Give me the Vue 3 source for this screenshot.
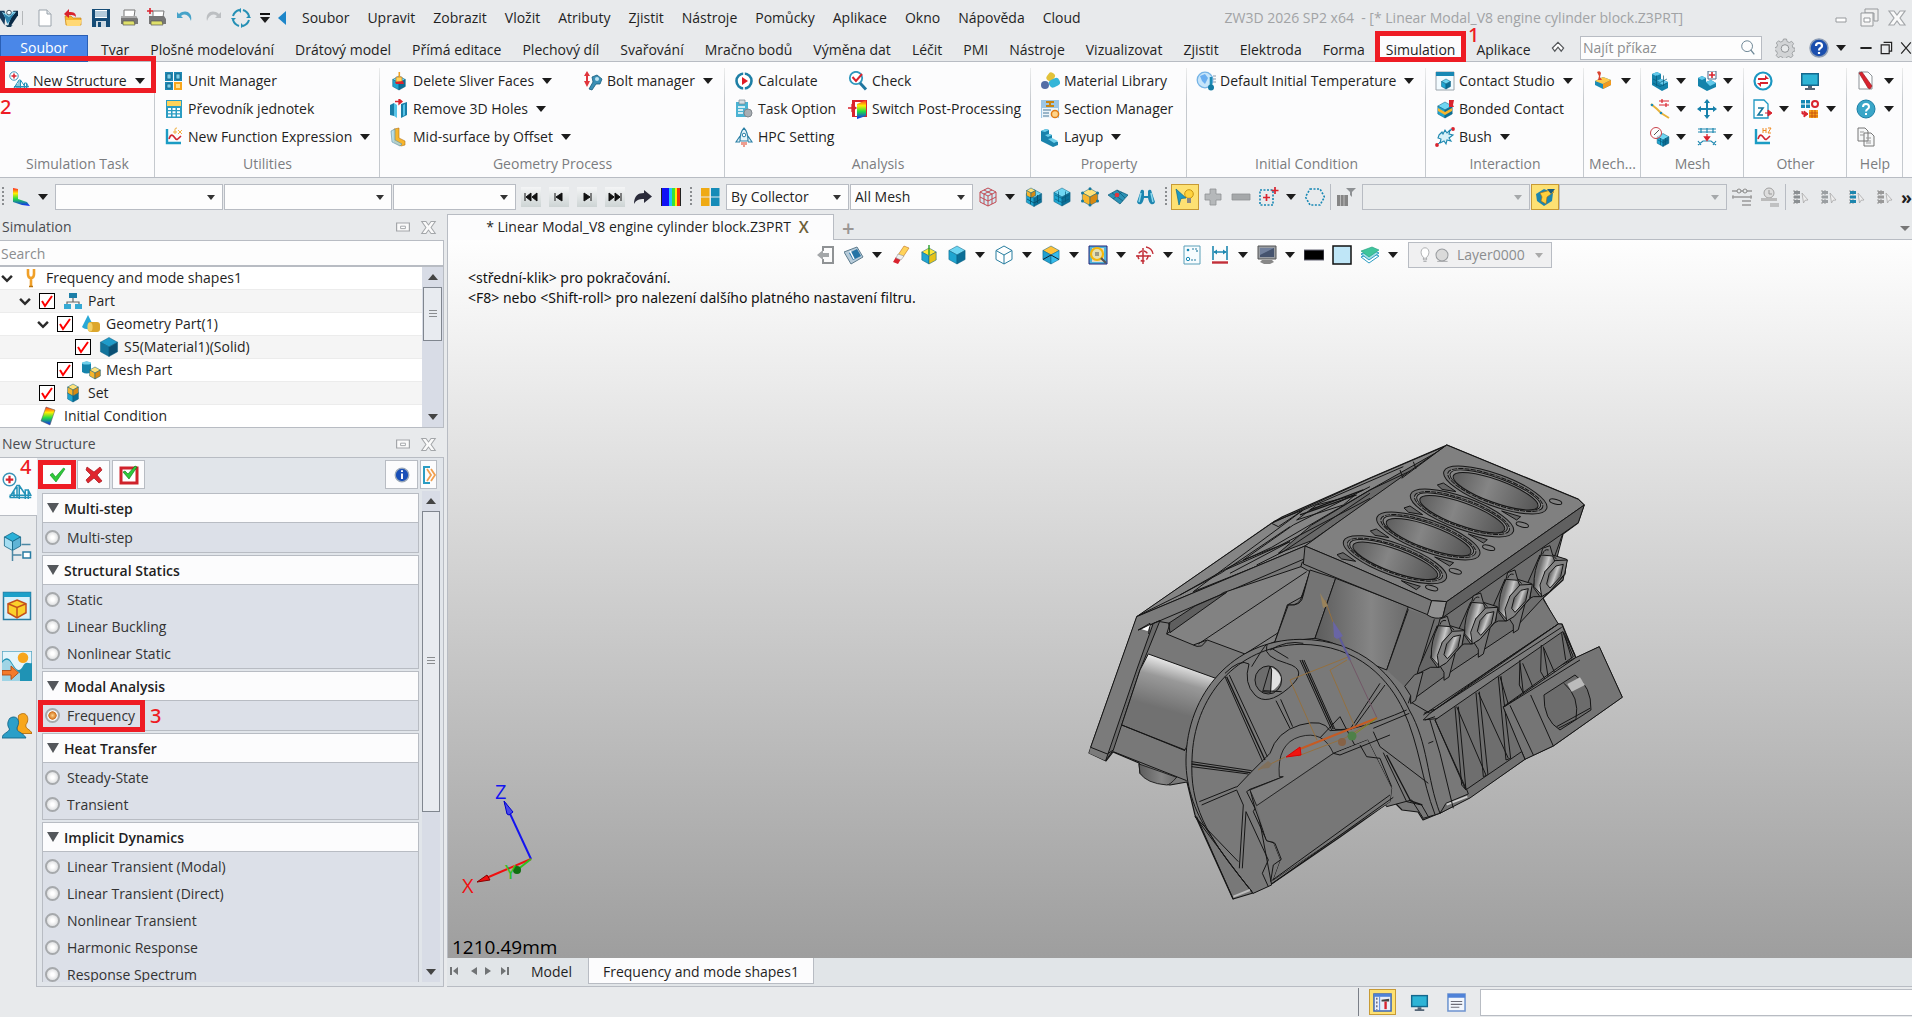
<script setup>
import { h, ref } from 'vue'

const cube = (t, l, r, x = 10, y = 10, s = 8) => {
  const w = s * 0.9, k = s / 2
  return `<g stroke="#0b5f80" stroke-width=".5" stroke-linejoin="round"><path fill="${t}" d="M${x} ${y - s}l${w} ${k}l${-w} ${k}l${-w} ${-k}z"/><path fill="${l}" d="M${x - w} ${y - k}l${w} ${k}v${s}l${-w} ${-k}z"/><path fill="${r}" d="M${x + w} ${y - k}l${-w} ${k}v${s}l${w} ${-k}z"/></g>`
}
const blue = (x, y, s) => cube('#6fd6f2', '#1fa5d0', '#0b6f97', x, y, s)
const gold = (x, y, s) => cube('#ffe27a', '#f7b52c', '#d88a12', x, y, s)
const grid = '<path d="M3 8l7 3.5 7-3.5M3 12l7 3.5 7-3.5M6.500 4.500v10.500M13.500 4.500v10.500" fill="none" stroke="#075a7a" stroke-width=".7"/>'
const plotAxes = '<path d="M3 2v14h14" fill="none" stroke="#1b9cc4" stroke-width="2.400"/><path d="M5 12c2-6 4-4 6-1s3 1 6-2" fill="none" stroke="#d22630" stroke-width="1.600"/>'
const rainbow = '<defs><linearGradient id="rb" x1="0" y1="0" x2="0" y2="1"><stop offset="0" stop-color="#f22"/><stop offset=".3" stop-color="#fe0"/><stop offset=".6" stop-color="#2d4"/><stop offset="1" stop-color="#12f"/></linearGradient></defs>'
const bridge = '<circle cx="5" cy="5" r="4.200" fill="#fff" stroke="#3b94b8" stroke-width="1"/><path d="M5 2.500v5M2.500 5h5" stroke="#d9232e" stroke-width="1.500"/><path d="M5 17l5-8h1.500v9M5 17h14.500M8 13v4M10 10v7M11.500 9l4 6v-3h2v6M15.500 12v6M5 15.500h14.500M17.500 12l2 4" fill="none" stroke="#2593b8" stroke-width="1"/>'
const tick = (c) => `<path d="M3 10l2.500-2 3 4L16.500 3l1.500 1L9 17z" fill="${c}" stroke="#0a8a1a" stroke-width=".6"/>`
const tree = (c) => `<path d="M3 3v14M6 3v14" stroke="#999" stroke-width="1" stroke-dasharray="2 1"/><path d="M3 4h6v3H3zM3 8.500h6v3H3zM3 13h6v3H3z" fill="${c}"/><path d="M11 6l6 7-3 .3-1.500 2.700z" fill="#eee" stroke="#aaa" stroke-width=".8"/>`

const icons = {
  logo: '<path d="M0 2l5 0 1 5-1 11-5-8z" fill="#163a5c"/><path d="M20 2l-5 0-4 9-2 8 3 0 8-12z" fill="#0a2a45"/><path d="M2 3l6 3 5-3 5 0-6 7-3 8-4-10z" fill="#8ed6ef"/><path d="M4 5l6 4 6-5-5 9-3 3z" fill="#2d83ae"/><circle cx="10" cy="4" r="2.600" fill="#f4fafd" stroke="#123" stroke-width=".8"/><path d="M6 18h8l-2 2H8z" fill="#173f5c"/>',
  page: '<path d="M4 2h8l4 4v12H4z" fill="#fff" stroke="#9aa3ab"/><path d="M12 2v4h4" fill="#e3e8ec" stroke="#9aa3ab"/>',
  open: '<path d="M2 8h6l2 2h8v7H3z" fill="#f7b52c" stroke="#c5851a" stroke-width=".7"/><path d="M3 12h16l-2 6H4z" fill="#ffd874"/><path d="M1 6l5-5v3c5 0 7 1 7 5-2-2-4-2-7-2v3z" fill="#d9232e"/>',
  save: '<path d="M1 1h18v18H1z" fill="#164c76"/><path d="M4 2h12v8H4z" fill="#fff"/><path d="M4 4h12M4 6h12M4 8h12" stroke="#6b97b7"/><path d="M5 13h10v6H5z" fill="#cfdbe4"/><path d="M7 14h3v5H7z" fill="#164c76"/>',
  print: '<path d="M5 2h11l-1 7H5z" fill="#fff" stroke="#777"/><path d="M2 8h15l2 3v5H2z" fill="#777"/><path d="M2 8h15l1 2H2z" fill="#aaa"/><path d="M4 13h11l1 4H4z" fill="#dfe06a" stroke="#555" stroke-width=".7"/>',
  printplus: '<path d="M6 3h11l-1 6H6z" fill="#fff" stroke="#777"/><path d="M2 8h15l2 3v5H2z" fill="#777"/><path d="M4 13h11l1 4H4z" fill="#dfe06a" stroke="#555" stroke-width=".7"/><path d="M3 0v6M0 3h6" stroke="#d9232e" stroke-width="1.600"/>',
  undo: '<path d="M2 4v6h6l-2-2c4-3 8-1 10 5 2-9-6-12-12-7z" fill="#46a3c9"/>',
  redo: '<path d="M18 4v6h-6l2-2c-4-3-8-1-10 5-2-9 6-12 12-7z" fill="#bcbfc2"/>',
  refresh: '<g fill="none" stroke="#2590b5" stroke-width="2"><path d="M8 2c-3 1-5 3-6 6M2 12c1 3 3 5 6 6M12 18c3-1 5-3 6-6M18 8c-1-3-3-5-6-6"/></g><path d="M10 0v5L7 2zM0 10h5l-3 3zM10 20v-5l3 3zM20 10h-5l3-3z" fill="#2590b5"/>',
  structure: bridge,
  unit: '<path d="M1 1h8v9H1zM10 1h8v9h-8zM1 11h8v8H1z" fill="#1f88b3"/><path d="M10 11h8v8h-8z" fill="#f7a61c"/><path d="M3 3h4v5H3zM12 3h4v5h-4zM3 13h4v4H3z" fill="#7fd0ea" stroke="#0c5678" stroke-width=".7"/><path d="M12 13h4v4h-4z" fill="#ffe08a"/>',
  calc: '<path d="M2 1h16v18H2z" fill="#2b9cc2"/><path d="M3 2h14v5H3z" fill="#ffd35a"/><path d="M4 9h3v2H4zM8.500 9h3v2h-3zM13 9h3v2h-3zM4 12.300h3v2H4zM8.500 12.300h3v2h-3zM13 12.300h3v2h-3zM4 15.600h3v2H4zM8.500 15.600h3v2h-3zM13 15.600h3v2h-3z" fill="#fff"/>',
  func: plotAxes + '<path d="M9 5h4M11 7V2q0-1 2-1M14 3l4 4M18 3l-4 4" stroke="#f0b040" fill="none"/>',
  sliver: blue(10, 12, 7) + '<path d="M7 6h6v5H7z" fill="#ffd35a" stroke="#a9641a" stroke-width=".6"/><path d="M6 11l8-1 1 3H7z" fill="#d9232e"/><path d="M9.500 1h1.600v5H9.500z" fill="#f0a020"/>',
  holes: '<path d="M1 6l4-2v13l-4-1zM12 5l6-2v13l-6 3z" fill="#1a7fa8"/><path d="M5 4l3 2v13l-3-2zM14 6l2-1v11l-2 1z" fill="#58c4e8"/><path d="M6 2.500h6M10 0l3 2.500L10 5z" stroke="#d9232e" fill="#d9232e" stroke-width="1.300"/>',
  midsurf: '<path d="M5 2l5-1v10l6 3v4l-4 1-7-4z" fill="#f7b52c" stroke="#b1731a" stroke-width=".6"/><path d="M2 4l4-2v11l7 4-2 2-8-4z" fill="#a9d8e8" fill-opacity=".8" stroke="#5e8da0" stroke-width=".6"/>',
  bolt: '<path d="M4 0l3 5H5v5h2l-3 6-3-6h2V5H1z" fill="#e0353d"/><path d="M9 6l5-2 5 4-2 5-4 0-4 6-3-1 4-7z" fill="#3a8fb5" stroke="#155d7d" stroke-width=".8"/><circle cx="14" cy="8" r="2" fill="#bfe4f2"/>',
  calculate: '<circle cx="10" cy="10" r="7.500" fill="#fff" stroke="#1e7fa5" stroke-width="2.600"/><path d="M10 0v4M10 16v4" stroke="#fff" stroke-width="1.600"/><path d="M8 6l6 4-6 4z" fill="#e01b24"/>',
  task: '<path d="M2 3h12v15H2z" fill="#4bb3d3"/><path d="M5 1h6v4H5z" fill="#d6dde2" stroke="#77848c" stroke-width=".7"/><path d="M4 8h7M4 11h5M4 14h5" stroke="#fff" stroke-width="1.400"/><circle cx="14" cy="14" r="4" fill="#a8aeb3" stroke="#7f868c"/>',
  rocket: '<path d="M10 1c3 3 4 6 4 13H6c0-7 1-10 4-13zM6 9l-4 6h4M14 9l4 6h-4" fill="#e6f4fa" stroke="#2a7fa5" stroke-width="1.100"/><circle cx="10" cy="8" r="1.800" fill="#fff" stroke="#2a7fa5"/><path d="M8 15v3M10 15v5M12 15v3" stroke="#e56a55" stroke-width="1.300"/>',
  check: '<circle cx="8" cy="7" r="6.200" fill="#fff" stroke="#2f97bd" stroke-width="1.800"/><path d="M12 12l6 6.500" stroke="#2076a0" stroke-width="3"/><path d="M4.500 6L8 10l6-7" fill="none" stroke="#d9232e" stroke-width="2"/>',
  post: rainbow + '<path d="M4 1h15v17H4z" fill="#d9232e"/><path d="M7 3h10v14H7z" fill="#fff"/><path d="M9 5l9-4v16l-9 3z" fill="url(#rb)"/><path d="M0 9h5M4 6l4 3-4 3z" stroke="#d9232e" fill="#d9232e" stroke-width="1.300"/>',
  material: '<rect x="7" y="1" width="7" height="9" rx="3" fill="#e2c23a" transform="rotate(35 10 6)"/><circle cx="5" cy="14" r="4" fill="#546ea6"/><rect x="9" y="8" width="11" height="8" rx="3.500" fill="#34b5d8" transform="rotate(-25 14 12)"/>',
  section: '<path d="M1 1h18v18H1z" fill="#9cc6e6"/><path d="M6 2h8v2h-3v2h3v2H6V6h3V4H6z" fill="#c98412"/><path d="M2 9h16v10H2z" fill="#edf4f9"/><path d="M3 11h8M3 14h6M3 17h6" stroke="#47779a" stroke-width="1.200"/><circle cx="15" cy="15" r="3.600" fill="#ffd48a" stroke="#e07c15" stroke-width="1.500"/>',
  layup: '<path d="M1 4l5-2 3 1v4l3 1v4l6 3v3l-5 2-12-6z" fill="#1a83ac"/><path d="M1 4l5-2 3 1-4 2zM5 8l4-1 3 1-4 2zM8 12l4-1 6 3-4 2z" fill="#6fd0ec"/>',
  temp: '<circle cx="9" cy="9" r="7.800" fill="#c7e5fa" stroke="#76b4e6" stroke-width="1.300"/><path d="M4 5l5-2 3 4-3 6-3-3z" fill="#6aaef0"/><path d="M15 6v10" stroke="#1c8bb4" stroke-width="2.600"/><circle cx="15" cy="16.500" r="3" fill="#147ba3"/><path d="M17 5h3M17 8h3M17 11h3" stroke="#89a"/>',
  contact: '<path d="M1 1h18v18H1z" fill="#f2fbff" stroke="#9aa3ab"/><path d="M1 1h18v4H1z" fill="#1788b4"/>' + blue(11, 13, 5),
  bonded: blue(10, 11, 8) + '<path d="M3 9l7 4 7-4v3l-7 4-7-4z" fill="#f7b52c"/><path d="M14 1h5l-1 5 1 2h-5z" fill="#d9232e"/>',
  bush: '<path d="M4 8l3-3 1 2 2-4 2 3 3-3-1 4 4 1-4 3 2 3-4-1-1 4-2-3-4 2 1-4-3-1z" fill="#d8f1f8" stroke="#1f88b0" stroke-width="1.100"/><circle cx="18" cy="2" r="1.900" fill="#d9232e"/><circle cx="2" cy="18" r="1.900" fill="#d9232e"/><path d="M3 17l3-3M14 5l3-3" stroke="#1f88b0"/>',
  mech: '<path d="M2 10l8-4 8 3v5l-8 4-8-4z" fill="#1b8bb5"/><path d="M2 10l8-4 8 3-8 4z" fill="#ffc94a"/><path d="M10 13v5l8-4V9z" fill="#f39a1f"/><path d="M4 1q3-2 4 1l-1 4 2 3H5l1-4z" fill="#d9432e"/>',
  mesh1: '<path d="M2 3l5-2 4 2v5l7 3v6l-6 3-10-6z" fill="#1583ab"/><path d="M2 3l5-2 4 2-5 2zM6 10l5-2 7 3-5 3z" fill="#63c9ea"/>' + grid,
  mesh2: '<path d="M1 7l4-2 4 2v4l5-2 5 3v4l-9 4-9-5z" fill="#1583ab"/><path d="M1 7l4-2 4 2-4 2zM9 11l5-2 5 3-6 3z" fill="#63c9ea"/><path d="M11 0h8v8h-8z" fill="#fff" stroke="#468"/><path d="M15 1v6M12 4h6" stroke="#d9232e" stroke-width="1.600"/>',
  mesh3: '<path d="M1 5l6 5 4 4 8 5" fill="none" stroke="#e7b23b" stroke-width="2"/><circle cx="2" cy="6" r="1.300" fill="#1c8bb4"/><circle cx="11" cy="14" r="1.300" fill="#1c8bb4"/><path d="M9 2h10M9 6h10M12 0v4M16 4v4" stroke="#d9232e" stroke-width="1.200"/>',
  mesh4: blue(13, 13, 6.500) + '<path d="M8 13l5 2.500 5-2.500M10.500 11v7M15.500 11v7" fill="none" stroke="#075a7a" stroke-width=".7"/><circle cx="6" cy="6" r="5.500" fill="#fff" fill-opacity=".6" stroke="#c8434b"/><path d="M4 8l5-5" stroke="#555"/>',
  move: '<path d="M10 0l3 4h-2v5h5V7l4 3-4 3v-2h-5v5h2l-3 4-3-4h2v-5H4v2l-4-3 4-3v2h5V4H7z" fill="#1680aa"/>',
  mesh5: '<path d="M1 2h18M1 5h18M1 18l5-4h8l5 4M1 14l3 4M19 14l-3 4M4 1v5M10 1v5M16 1v5" fill="none" stroke="#1f88b0" stroke-width="1.200"/><path d="M10 7v4M7.500 10h5L10 13.500z" stroke="#d9232e" fill="#d9232e" stroke-width="1.300"/>',
  swap: '<circle cx="10" cy="10" r="8.500" fill="#fff" stroke="#1c97c2" stroke-width="2.200"/><path d="M5 8h8M15 12H7" stroke="#d9232e" stroke-width="2"/><path d="M12 4l4 4h-4zM8 16l-4-4h4z" fill="#d9232e"/>',
  monitor: '<path d="M1 2h18v13H1z" fill="#14688e"/><path d="M2.500 3.500h15v10h-15z" fill="#2db4d6"/><path d="M8 15h4v2h3v2H5v-2h3z" fill="#567"/>',
  zfile: '<path d="M1 1h10l4 4v14H1z" fill="#fff" stroke="#1c97c2" stroke-width="1.300"/><path d="M5 9h5l-5 7h5" fill="none" stroke="#17779c" stroke-width="1.600"/><path d="M12 14h5M15 11l4 3-4 3z" stroke="#d9232e" fill="#d9232e"/>',
  gridgear: '<path d="M1 1h9v8H1z" fill="#1788b4"/><path d="M5.500 1v8M1 5h9" stroke="#fff"/><circle cx="15" cy="5" r="3" fill="none" stroke="#d9232e" stroke-width="2"/><path d="M9 11h9v8H9z" fill="#f7a61c"/><path d="M9 14h9M9 17h9M12 11v8M15 11v8" stroke="#c1440e" stroke-width=".8"/><path d="M2 12v3h3M4 12l4 3-4 3z" stroke="#d9232e" fill="#d9232e"/>',
  hz: plotAxes + '<path d="M10 1v5M10 3.500h3M13 1v5M15 1h3l-3 5h3" stroke="#f08b20" fill="none"/>',
  pagered: '<path d="M3 1h9l4 4v13H3z" fill="#fff" stroke="#8b9196"/><path d="M3 2l3-1 10 14-2 3-2-1z" fill="#d9232e" stroke="#8b1820" stroke-width=".6"/>',
  helpteal: '<circle cx="10" cy="10" r="9" fill="#3aa6c8" stroke="#1b7ea5"/><path d="M7 8c0-4 6-4 6 0 0 2-3 2-3 4.500M10 14v2" fill="none" stroke="#fff" stroke-width="2"/>',
  copy: '<path d="M2 1h7l3 3v10H2zM8 6h7l3 3v10H8z" fill="#f6f7f8" stroke="#777" stroke-width="1"/><path d="M4 5h4M4 8h4M10 11h5M10 14h5M10 16h5" stroke="#999"/>',
  bend: rainbow + '<path d="M2 1l5 1v10l9 3 3 4-8-1-9-3z" fill="url(#rb)"/>',
  first: '<path d="M4 6v8M10 6l-5 4 5 4zM16 6l-5 4 5 4z" fill="#111" stroke="#111"/>',
  prev: '<path d="M6 6v8M13 6l-6 4 6 4z" fill="#111" stroke="#111"/>',
  next: '<path d="M14 6v8M7 6l6 4-6 4z" fill="#111" stroke="#111"/>',
  last: '<path d="M16 6v8M10 6l5 4-5 4zM4 6l5 4-5 4z" fill="#111" stroke="#111"/>',
  share: '<path d="M1 17c0-8 4-11 10-11V3l8 6.500-8 6.500v-4c-5 0-8 1-10 5z" fill="#2a2b3a"/>',
  colorbar: '<path d="M0 1h20v18H0z" fill="#222"/><path d="M1 1h7v18H1z" fill="#1010f5"/><path d="M8 1h3v18H8z" fill="#1fc4ff"/><path d="M11 1h3v18h-3z" fill="#35e23c"/><path d="M14 1h2v18h-2z" fill="#fff000"/><path d="M16 1h3v18h-3z" fill="#f03010"/>',
  windows: '<path d="M1 1h8.500v8.500H1zM1 10.500h8.500V19H1z" fill="#efaa14"/><path d="M11 1h8.500v8.500H11zM11 10.500h8.500V19H11z" fill="#158bb8"/>',
  wiremesh: '<path d="M2 5l8-4 8 4v10l-8 4-8-4z" fill="#cfeaf3" stroke="#c34850"/><path d="M2 5l8 4 8-4M10 9v10M2 10l8 4 8-4M6 3l8 4v10M14 3L6 7v10" fill="none" stroke="#c34850"/>',
  cubeset: blue(10, 11, 8.500) + gold(7, 6, 5) + '<path d="M3 12l7 4 7-4M6.500 10v7M13.500 8v8" stroke="#064b66" fill="none" stroke-width=".8"/>',
  cubegrid: blue(10, 10, 9) + grid,
  cubegold: gold(10, 10, 8.500) + '<g fill="#13789f"><circle cx="10" cy="1.800" r="1.500"/><circle cx="2.500" cy="6" r="1.500"/><circle cx="17.500" cy="6" r="1.500"/><circle cx="10" cy="18" r="1.500"/><circle cx="2.500" cy="14" r="1.500"/><circle cx="17.500" cy="14" r="1.500"/></g>',
  surf: '<path d="M0 8l9-5 11 5-8 9z" fill="#2a91b5" stroke="#0d5a78" stroke-width=".7"/><path d="M4 6l11 8M9 3l8 8M5 12l9-7" stroke="#0d5a78" stroke-width=".7"/><circle cx="9" cy="8" r="2.300" fill="#e0353d"/>',
  binoc: '<path d="M5 3q2-1 3 1v5h4V4q1-2 3-1l4 12q-1 3-4 2-2-1-3-6H8q-1 5-3 6-3 1-4-2z" fill="#1d86b0"/><path d="M5 6l-2 9M15 6l2 9" stroke="#8bd8ee" stroke-width="1.500"/>',
  bulb: '<path d="M1 2l10 9-5 .5L4 18z" fill="#1d9ac4" stroke="#0d6a8b" stroke-width=".7"/><circle cx="14" cy="7" r="4.300" fill="#ffd33d" stroke="#c99512"/><path d="M12 11h4v5h-4z" fill="#888"/>',
  plus: '<path d="M7 2h6v5h5v6h-5v5H7v-5H2V7h5z" fill="#b5b8ba" stroke="#8f9294" stroke-width=".8"/>',
  minus: '<path d="M1 7h18v6H1z" fill="#a5a8aa" stroke="#8f9294" stroke-width=".8"/>',
  selbox: '<path d="M1 3h13v15H1z" fill="none" stroke="#1788b4" stroke-width="1.600" stroke-dasharray="2 1.500"/><path d="M7.500 7v7M4 10.500h7M16 0v7M12.500 3.500h7" stroke="#d9232e" stroke-width="1.700"/>',
  hexa: '<path d="M5 2h10l4.500 8L15 18H5L.5 10z" fill="none" stroke="#1788b4" stroke-width="1.600" stroke-dasharray="2 1.500"/>',
  barfilter: '<path d="M1 8h11v11H1z" fill="#858585"/><path d="M4.500 8v11M8 8v11" stroke="#bbb"/><path d="M10 1h10l-4 4v5l-2-2V5z" fill="#8e9194"/>',
  filtergold: '<path d="M1 7l8-5 9 4-1 8-8 5-7-5z" fill="#1d86ae"/><path d="M5 6l11-3 3 2-7 5-1 7-5-3 1-4z" fill="#ffcf3a" stroke="#a56a10" stroke-width=".6"/><path d="M12 2h8l-4 5z" fill="#1a5d80"/>',
  ref1: '<path d="M0 4h20M0 10h20" stroke="#999" stroke-width="1.400"/><circle cx="7" cy="4" r="2" fill="#e8eaeb" stroke="#888"/><circle cx="13" cy="4" r="2" fill="#e8eaeb" stroke="#888"/><path d="M10 14h9M10 18h9" stroke="#999" stroke-width="1.400"/><path d="M1 8v4M19 8v4" stroke="#999"/>',
  ref2: '<circle cx="9" cy="6" r="5" fill="#ddd" stroke="#a0a0a0"/><path d="M9 3v4h3" stroke="#999" fill="none"/><path d="M1 11h16v3H1z" fill="#bbb"/><path d="M10 17h9M10 19h9" stroke="#999"/>',
  tree1: tree('#8b8f92'), tree2: tree('#9b9fa2'), tree3: tree('#1d86ae'), tree4: tree('#999'),
  exit: '<path d="M7 6V2h10v16H7v-4" fill="none" stroke="#8f9294" stroke-width="2"/><path d="M1 10l6-5v3h6v4H7v3z" fill="#a4a7a9"/>',
  viewrect: '<path d="M0 7l13-5 6 10-12 7z" fill="#b7cbd9" stroke="#5d7b8d"/><path d="M5 8l8-4 4 7-8 4z" fill="#2474a5"/><path d="M6 6l4 8" stroke="#fff" stroke-width="1.500"/>',
  eraser: '<path d="M13 1l5 2-6 9-5-2z" fill="#ffd35a" stroke="#c07020" stroke-width=".6"/><path d="M5 12l5 2-3 5-5-2z" fill="#d9232e"/><path d="M7 9l6 2-3 4-5-2z" fill="#eee" stroke="#888" stroke-width=".5"/>',
  cubeline: cube('#ffe63a', '#1fa5d0', '#e6c21a', 10, 11, 8) + '<path d="M10 0v10" stroke="#1a9a20" stroke-width="1.300"/>',
  cubeblue: blue(10, 10, 9),
  cubewire: '<path d="M2 5.500l8-4.500 8 4.500v9L10 19l-8-4.500zM2 5.500L10 10l8-4.500M10 10v9" fill="#fff" stroke="#277d9f" stroke-width="1"/>',
  cubemix: cube('#ffc23a', '#20a0cf', '#35bcec', 10, 10, 9) + '<path d="M2 14.500L10 10l8 4.500" stroke="#123" fill="none"/>',
  lens: '<path d="M1 1h18v18H1z" fill="#51b3db" stroke="#227"/><path d="M4 3h12v14H4z" fill="#e2dcc8"/><circle cx="9" cy="9" r="6" fill="#e9e2a0" fill-opacity=".6" stroke="#f5b70a" stroke-width="2.200"/><path d="M7 8h4M7 10h4" stroke="#555"/><path d="M13 13l5 5" stroke="#555" stroke-width="2.200"/>',
  target: '<path d="M8 3v16M1 11h15" stroke="#c22f38" stroke-width="1.500"/><circle cx="8" cy="11" r="5" fill="none" stroke="#c22f38" stroke-width="1.500" stroke-dasharray="4 2"/><path d="M11 2q6 1 7 7" fill="none" stroke="#c22f38" stroke-width="1.300"/>',
  chart: '<path d="M2 1h16v18H2z" fill="#f7fcfe" stroke="#5a9fb8"/><path d="M10 4h5v4M9 15h5" stroke="#277d9f" stroke-width="1.200" stroke-dasharray="2 1" fill="none"/><circle cx="6" cy="14" r="1.700" fill="none" stroke="#1788b4"/><circle cx="6" cy="5" r="1.300" fill="#1788b4"/>',
  measure: '<path d="M3 1v14M17 1v14M4 7h12" stroke="#1f88b0" stroke-width="1.600"/><path d="M7 4.500L3.500 7 7 9.500zM13 4.500L16.500 7 13 9.500z" fill="#1f88b0"/><path d="M2 17.500h16" stroke="#c22f38" stroke-width="2.400"/>',
  screen: '<path d="M1 1h18v13H1z" fill="#999da2" stroke="#555"/><path d="M3 3h14v9H3z" fill="#45536e"/><path d="M3 3h14L3 10z" fill="#71809c"/><path d="M5 15h10l2 2-4 2H7l-4-2z" fill="#888"/>',
  black: '<path d="M0 5h20v10H0z" fill="#000" stroke="#667"/>',
  sky: '<path d="M1 1h18v18H1z" fill="#bfe6f7" stroke="#111" stroke-width="1.500"/>',
  layers: '<path d="M1 12l11-4 7 3-10 7z" fill="#fff" stroke="#2b9cc2"/><path d="M1 9l11-4 7 3-10 7z" fill="#a5e0e8" stroke="#2b9cc2"/><path d="M1 6l11-4 7 3-10 7z" fill="#3fc59c" stroke="#1b9a78" stroke-width=".6"/>',
  fork: '<path d="M7 1v5q0 4 3 4t3-4V1M10 10v8" fill="none" stroke="#f0a028" stroke-width="2.600"/><path d="M8 18.500h4" stroke="#b87412" stroke-width="1.500"/>',
  part: '<path d="M6 2h8v5H6z" fill="#1d7fa8"/><path d="M1 13h7v5H1zM12 13h7v5h-7z" fill="#35a9d4"/><path d="M10 7v4M4 13v-2h12v2" fill="none" stroke="#666" stroke-width="1.200"/>',
  geom: '<path d="M7 1l6 12c-3 3-9 3-12 0z" fill="#2aa9d6"/><rect x="7" y="8" width="12" height="10" rx="3" fill="#dca72c"/><ellipse cx="9" cy="13" rx="2.600" ry="4.500" fill="#f3d066"/>',
  solid: cube('#1f9bc9', '#12749c', '#0b4f73', 10, 10, 9.500),
  meshpart: '<path d="M1 3q5-3 9 0v9q-4 3-9 0z" fill="#1583ab"/><ellipse cx="5.500" cy="3" rx="4.500" ry="1.600" fill="#6fd0ec"/>' + gold(14, 13, 6),
  set: blue(10, 13, 6) + gold(10, 7, 6),
  initial: rainbow + '<path d="M7 1l9 3-5 15-9-4z" fill="url(#rb)" stroke="#555" stroke-width=".5"/>',
  ok: tick('#2fc93a'),
  cancel: '<path d="M3 2l7 5 6-5 2 3-5 5 5 6-3 2-5-5-6 5-2-3 5-5-5-5z" fill="#e0262e" stroke="#a3141b" stroke-width=".7"/>',
  apply: '<path d="M2 3h16v15H2z" fill="#fff" stroke="#cf222b" stroke-width="3"/>' + '<path d="M4 7l2-1 3 3 7-8 2 1-8 12z" fill="#2fc93a" stroke="#0a6a16" stroke-width=".6"/>',
  info: '<circle cx="10" cy="10" r="8.500" fill="#1a4fb8" stroke="#9aa8b8" stroke-width="1.600"/><path d="M10 8v7M10 4v2.200" stroke="#fff" stroke-width="2.400"/>',
  expand: '<path d="M11 2H5v16h6" fill="none" stroke="#2b9cc2" stroke-width="2"/><path d="M8 4l4 6-4 6M12 4l4 6-4 6" fill="none" stroke="#f0a050" stroke-width="1.800"/>',
  side1: cube('#2cb1d8', '#a5def2', '#5fb4d6', 7, 7, 6) + '<path d="M13 9h6M7 13v7M7 16h6" stroke="#4b87a3"/><path d="M14 14h5v4h-5z" fill="#fff" stroke="#287ca2"/>',
  side2: '<path d="M1 1h18v18H1z" fill="#d9f1fa" stroke="#287ca2"/><path d="M1 1h18v3H1z" fill="#1ca0c9"/><path d="M10 6l6 2.500v6L10 18l-6-3.500v-6z" fill="#fbd02b" stroke="#c4501c"/><path d="M4 8.500l6 2.500 6-2.500M10 11v7" fill="none" stroke="#c4501c"/>',
  side3: '<path d="M0 0h20v20H0z" fill="#e4f5fb" stroke="#58a6c3"/><path d="M0 7c4-5 6 0 8 3s4 4 6 0 4-1 6-2v12H0z" fill="#1f93b5"/><path d="M0 8c4-5 6 0 8 3l4 4v5H0z" fill="#bfe5f1" fill-opacity=".8"/><circle cx="14" cy="4.500" r="3.500" fill="#f7a61c"/><path d="M0 13h6v-3l5 4.500L6 19v-3H0z" fill="#f47a2a" stroke="#b34a0d" stroke-width=".6"/>',
  side4: '<path d="M11 3c5-4 8 2 5 6-1 3 3 3 4 6H10z" fill="#f7a61c" stroke="#b36e0d" stroke-width=".6"/><path d="M5 5c4-3 8 1 5 6-1 3 4 3 6 7H0c0-3 5-4 5-6-2-3-1-5 0-7z" fill="#2b9fc8" stroke="#15688a" stroke-width=".6"/>',
  gear: '<path d="M8.500 1h3l.6 2.500 2.200 1 2.300-1.200 2 2.300-1.300 2.100.8 2.300h2v3l-2 .5-1 2 1 2.200-2.300 2-2-1.200-2.300.8-.5 2h-3l-.5-2-2-.8-2.300 1.200-2-2.300 1.200-2-.9-2.300-2-.5v-3l2-.3 1-2.300-1.200-2 2.200-2.200 2.200 1.200 2-.8z" fill="#d2d4d6" stroke="#929598" stroke-width=".8"/><circle cx="10" cy="10.500" r="3.800" fill="#e8eaeb" stroke="#929598"/>',
  help: '<circle cx="10" cy="10" r="9" fill="#1b4fae" stroke="#8d9db5" stroke-width="1.500"/><path d="M7 8c0-4 6-4 6 0 0 2-3 2-3 4.500M10 14v2" fill="none" stroke="#fff" stroke-width="2.200"/>',
  tool: '<path d="M1 1h18v18H1z" fill="#e9eef8" stroke="#3c67b4" stroke-width="1.600"/><path d="M1 1h18v3H1z" fill="#4f82d8"/><path d="M4 5v13" stroke="#667" stroke-dasharray="2 2" stroke-width="1.500"/><path d="M7 4v15" stroke="#4f82d8"/><path d="M9 7l8-1v3h-8z" fill="#444"/><path d="M12 9h2.500v8H12z" fill="#d9232e"/>',
  listwin: '<path d="M1 1h18v18H1z" fill="#f2f6fc" stroke="#6d93cf" stroke-width="1.600"/><path d="M1 1h18v4H1z" fill="#4f82d8"/><path d="M4 9h12M4 12h12M4 15h9" stroke="#6d6d78" stroke-width="1.200"/>',
  float: '<path d="M2 5h16v10H2z" fill="#fafafa" stroke="#a3a6a9" stroke-width="1.500"/><path d="M7 9h6v3H7z" fill="#fff" stroke="#a3a6a9" stroke-width="1.200"/>',
  close: '<path d="M2 3h5l3 4 3-4h5l-5 7 5 7h-5l-3-4-3 4H2l5-7z" fill="#fafafa" stroke="#a3a6a9" stroke-width="1.200"/>',
  minwin: '<path d="M5 10h10v4H5z" fill="#fff" stroke="#96999c"/>',
  restwin: '<path d="M6 1h13v12h-4V5H6z" fill="#eee" stroke="#96999c"/><path d="M2 5h12v13H2z" fill="#f4f4f4" stroke="#96999c"/><path d="M5 10h6v4H5z" fill="#fff" stroke="#96999c"/>',
  minimal: '<path d="M3 10h14" stroke="#222" stroke-width="2.500"/>',
  restore: '<path d="M7 3h10v11h-3M4 6h10v11H4z" fill="none" stroke="#222" stroke-width="1.500"/>',
  xthin: '<path d="M4 3l12 14M16 3L4 17" stroke="#222" stroke-width="1.500"/>',
  collapse: '<path d="M3 10l7-7 7 7-3 4-4-5-4 5z" fill="#fff" stroke="#55585b" stroke-width="1.500"/>',
  search: '<circle cx="9" cy="8" r="6" fill="none" stroke="#6d8796" stroke-width="1.100"/><path d="M13 12l4 5" stroke="#6d8796" stroke-width="1.500"/>',
  lamp: '<path d="M8 13c-5-5-3-12 2-12s7 7 2 12v3H8z" fill="#fff" stroke="#9a9da0"/><path d="M8 14h4M8 18h4" stroke="#9a9da0"/>',
  disc: '<circle cx="10" cy="10" r="7.500" fill="#dadada" stroke="#9a9da0" stroke-width="1.300"/><path d="M4 18h13" stroke="#9a9da0"/>',
  chev: '<path d="M3 7l7 7 7-7" fill="none" stroke="#2b2b2b" stroke-width="3.600"/>',
}

const Ico = (props) => h('svg', { viewBox: '0 0 20 20', class: 'ico', 'aria-hidden': 'true', innerHTML: icons[props.n] })
Ico.props = ['n']

const quick = ['page', 'open', 'save', 'print', 'printplus', 'undo', 'redo', 'refresh']
const menu = ['Soubor', 'Upravit', 'Zobrazit', 'Vložit', 'Atributy', 'Zjistit', 'Nástroje', 'Pomůcky', 'Aplikace', 'Okno', 'Nápověda', 'Cloud']
const tabs = ['Tvar', 'Plošné modelování', 'Drátový model', 'Přímá editace', 'Plechový díl', 'Svařování', 'Mračno bodů', 'Výměna dat', 'Léčit', 'PMI', 'Nástroje', 'Vizualizovat', 'Zjistit', 'Elektroda', 'Forma', 'Simulation', 'Aplikace']

// Each item: [icon, label, has drop-down]; items fill a group column by column.
const groups = [
  { label: 'Simulation Task', mark: true, items: [['structure', 'New Structure', 1]] },
  { label: 'Utilities', items: [['unit', 'Unit Manager'], ['calc', 'Převodník jednotek'], ['func', 'New Function Expression', 1]] },
  { label: 'Geometry Process', kind: 'geometry', items: [['sliver', 'Delete Sliver Faces', 1], ['holes', 'Remove 3D Holes', 1], ['midsurf', 'Mid-surface by Offset', 1], ['bolt', 'Bolt manager', 1]] },
  { label: 'Analysis', kind: 'analysis', items: [['calculate', 'Calculate'], ['task', 'Task Option'], ['rocket', 'HPC Setting'], ['check', 'Check'], ['post', 'Switch Post-Processing']] },
  { label: 'Property', items: [['material', 'Material Library'], ['section', 'Section Manager'], ['layup', 'Layup', 1]] },
  { label: 'Initial Condition', items: [['temp', 'Default Initial Temperature', 1]] },
  { label: 'Interaction', items: [['contact', 'Contact Studio', 1], ['bonded', 'Bonded Contact'], ['bush', 'Bush', 1]] },
  { label: 'Mech...', items: [['mech', '', 1]] },
  { label: 'Mesh', kind: 'icons', items: [['mesh1', '', 1], ['mesh3', '', 1], ['mesh4', '', 1], ['mesh2', '', 1], ['move', '', 1], ['mesh5', '', 1]] },
  { label: 'Other', kind: 'icons', items: [['swap', ''], ['zfile', '', 1], ['hz', ''], ['monitor', ''], ['gridgear', '', 1]] },
  { label: 'Help', items: [['pagered', '', 1], ['helpteal', '', 1], ['copy', '']] },
]

const viewTools = [['exit'], ['viewrect', 1], ['eraser'], ['cubeline'], ['cubeblue', 1], ['cubewire', 1], ['cubemix', 1], ['lens', 1], ['target', 1], ['chart'], ['measure', 1], ['screen', 1], ['black'], ['sky'], ['layers', 1]]

const treeRows = [
  { level: 0, open: true, icon: 'fork', text: 'Frequency and mode shapes1' },
  { level: 1, open: true, check: true, icon: 'part', text: 'Part' },
  { level: 2, open: true, check: true, icon: 'geom', text: 'Geometry Part(1)' },
  { level: 3, check: true, icon: 'solid', text: 'S5(Material1)(Solid)' },
  { level: 2, check: true, icon: 'meshpart', text: 'Mesh Part' },
  { level: 1, check: true, icon: 'set', text: 'Set' },
  { level: 1, icon: 'initial', text: 'Initial Condition' },
]

const sections = [
  { title: 'Multi-step', items: ['Multi-step'] },
  { title: 'Structural Statics', items: ['Static', 'Linear Buckling', 'Nonlinear Static'] },
  { title: 'Modal Analysis', items: ['Frequency'] },
  { title: 'Heat Transfer', items: ['Steady-State', 'Transient'] },
  { title: 'Implicit Dynamics', items: ['Linear Transient (Modal)', 'Linear Transient (Direct)', 'Nonlinear Transient', 'Harmonic Response', 'Response Spectrum'] },
]
const solver = ref('Frequency')

const bores = [[466, 180], [366, 249], [265, 318], [165, 389]]
const ports = [[0, 0], [-105, 73], [-208, 142], [-308, 212]]
</script>

<template>
  <div class="app">
    <header class="titlebar">
      <Ico n="logo" class="logo" />
      <span class="thin"></span>
      <button v-for="q in quick" :key="q" class="slot" :aria-label="q"><Ico :n="q" /></button>
      <button class="slot more" aria-label="Customize"><i class="bar"></i><i class="caret"></i></button>
      <i class="left-arrow"></i>
      <nav class="menu"><a v-for="m in menu" :key="m" href="#">{{ m }}</a></nav>
      <div class="wintitle">ZW3D 2026 SP2 x64&nbsp; - [* Linear Modal_V8 engine cylinder block.Z3PRT]</div>
      <button class="slot" aria-label="Minimize"><Ico n="minwin" /></button>
      <button class="slot" aria-label="Restore"><Ico n="restwin" /></button>
      <button class="slot" aria-label="Close"><Ico n="close" /></button>
    </header>

    <div class="tabrow">
      <button class="filetab">Soubor</button>
      <nav class="tabs">
        <a v-for="t in tabs" :key="t" href="#" :class="{ active: t === 'Simulation' }">{{ t }}
          <template v-if="t === 'Simulation'"><span class="mark"></span><b class="num one">1</b></template>
        </a>
      </nav>
      <button class="slot" aria-label="Collapse ribbon"><Ico n="collapse" class="small" /></button>
      <div class="find"><input aria-label="Najít příkaz" placeholder="Najít příkaz"><Ico n="search" /></div>
      <button class="slot wide" aria-label="Settings"><Ico n="gear" /></button>
      <button class="slot wide" aria-label="Help"><Ico n="help" /></button>
      <i class="caret"></i>
      <div class="docbtns">
        <button aria-label="Minimize document"><Ico n="minimal" class="small" /></button>
        <button aria-label="Restore document"><Ico n="restore" class="small" /></button>
        <button aria-label="Close document"><Ico n="xthin" class="small" /></button>
      </div>
    </div>

    <section class="ribbon">
      <div v-for="g in groups" :key="g.label" class="group">
        <div class="items" :class="g.kind">
          <button v-for="it in g.items" :key="it[0]" class="item" :aria-label="it[1] || it[0]">
            <Ico :n="it[0]" /><span v-if="it[1]">{{ it[1] }}</span><i v-if="it[2]" class="caret"></i>
          </button>
        </div>
        <div class="glabel">{{ g.label }}</div>
        <template v-if="g.mark"><span class="mark"></span><b class="num two">2</b></template>
      </div>
    </section>

    <div class="toolbar">
      <i class="dots"></i>
      <button class="slot" aria-label="Result"><Ico n="bend" /></button>
      <i class="caret slotcaret"></i>
      <label class="combo long"><select aria-label="Result case"></select><i></i></label>
      <label class="combo long"><select aria-label="Result type"></select><i></i></label>
      <label class="combo mid"><select aria-label="Component"></select><i></i></label>
      <button v-for="p in ['first', 'prev', 'next', 'last']" :key="p" class="slot play" :aria-label="p"><Ico :n="p" /></button>
      <button class="slot" aria-label="Share"><Ico n="share" /></button>
      <button class="slot" aria-label="Colors"><Ico n="colorbar" /></button>
      <i class="dots spaced"></i>
      <button class="slot" aria-label="Windows"><Ico n="windows" /></button>
      <label class="combo mid"><select aria-label="Display by"><option>By Collector</option></select><i></i></label>
      <label class="combo mid"><select aria-label="Mesh filter"><option>All Mesh</option></select><i></i></label>
      <button class="slot" aria-label="Mesh"><Ico n="wiremesh" /></button>
      <i class="caret slotcaret"></i>
      <button v-for="p in ['cubeset', 'cubegrid', 'cubegold', 'surf', 'binoc']" :key="p" class="slot" :aria-label="p"><Ico :n="p" /></button>
      <i class="dots spaced"></i>
      <button class="slot on" aria-label="Pick"><Ico n="bulb" /></button>
      <button class="slot" aria-label="Add"><Ico n="plus" /></button>
      <button class="slot" aria-label="Remove"><Ico n="minus" /></button>
      <button class="slot" aria-label="Box select"><Ico n="selbox" /></button>
      <i class="caret slotcaret"></i>
      <button class="slot" aria-label="Polygon select"><Ico n="hexa" /></button>
      <i class="vsep"></i>
      <button class="slot" aria-label="Filter list"><Ico n="barfilter" /></button>
      <label class="combo long off"><select disabled aria-label="Filter"></select><i></i></label>
      <button class="slot on" aria-label="Filter on"><Ico n="filtergold" /></button>
      <label class="combo long off"><select disabled aria-label="Reference"></select><i></i></label>
      <button class="slot" aria-label="Reference 1"><Ico n="ref1" /></button>
      <button class="slot" aria-label="Reference 2"><Ico n="ref2" /></button>
      <i class="vsep"></i>
      <button v-for="p in ['tree1', 'tree2', 'tree3', 'tree4']" :key="p" class="slot" :aria-label="p"><Ico :n="p" /></button>
      <b class="over">»</b>
    </div>

    <div class="main">
      <aside class="left">
        <div class="ptitle"><span>Simulation</span><Ico n="float" class="small" /><Ico n="close" /></div>
        <input class="psearch" aria-label="Search" placeholder="Search">
        <div class="treebox">
          <div class="tree">
            <div v-for="r in treeRows" :key="r.text" class="row" :class="'l' + r.level">
              <Ico v-if="r.open" n="chev" class="chev" /><span v-else class="chev"></span>
              <label><input v-if="r.check" type="checkbox" checked><Ico :n="r.icon" />{{ r.text }}</label>
            </div>
          </div>
          <div class="scroll"><i class="up"></i><div class="thumb short"></div><i class="down"></i></div>
        </div>
        <div class="ptitle"><span>New Structure</span><Ico n="float" class="small" /><Ico n="close" /></div>
        <div class="panel">
          <div class="side">
            <button class="sel" aria-label="New Structure"><Ico n="structure" /><b class="num four">4</b></button>
            <button v-for="s in ['side1', 'side2', 'side3', 'side4']" :key="s" :aria-label="s"><Ico :n="s" /></button>
          </div>
          <div class="pbody">
            <div class="pbtns">
              <button aria-label="OK"><Ico n="ok" /><span class="mark"></span></button>
              <button aria-label="Cancel"><Ico n="cancel" /></button>
              <button aria-label="Apply"><Ico n="apply" /></button>
              <button class="push" aria-label="Info"><Ico n="info" /></button>
              <button class="narrow" aria-label="Expand"><Ico n="expand" /></button>
            </div>
            <div class="plist">
              <div class="secs">
                <section v-for="s in sections" :key="s.title" class="sec">
                  <h3><i></i>{{ s.title }}</h3>
                  <div class="opts">
                    <label v-for="o in s.items" :key="o"><input v-model="solver" type="radio" name="solver" :value="o">{{ o }}
                      <template v-if="o === 'Frequency'"><span class="mark"></span><b class="num three">3</b></template>
                    </label>
                  </div>
                </section>
              </div>
              <div class="scroll"><i class="up"></i><div class="thumb tall"></div><i class="down"></i></div>
            </div>
          </div>
        </div>
      </aside>

      <main class="work">
        <div class="doctabs">
          <div class="doctab">* Linear Modal_V8 engine cylinder block.Z3PRT<button aria-label="Close tab">X</button></div>
          <button class="newtab" aria-label="New tab">+</button>
          <i class="listcaret"></i>
        </div>
        <div class="canvas">
          <div class="viewtools">
            <template v-for="v in viewTools" :key="v[0]">
              <button class="slot" :aria-label="v[0]"><Ico :n="v[0]" /></button><i v-if="v[1]" class="caret slotcaret"></i>
            </template>
            <button class="layer"><Ico n="lamp" class="small" /><Ico n="disc" class="small" /><span>Layer0000</span><i></i></button>
          </div>
          <p class="hint">&lt;střední-klik&gt; pro pokračování.<br>&lt;F8&gt; nebo &lt;Shift-roll&gt; pro nalezení dalšího platného nastavení filtru.</p>

          <svg class="engine" viewBox="1070 430 570 480" fill="none" stroke="#151515" stroke-linejoin="round">
            <defs>
              <linearGradient id="bore" x1="0" x2="1"><stop offset="0" stop-color="#5d5d5d" /><stop offset=".4" stop-color="#858585" /><stop offset="1" stop-color="#555" /></linearGradient>
              <linearGradient id="tube" x1="0" y1="0" x2="1" y2=".5"><stop offset="0" stop-color="#5e5e5e" /><stop offset=".35" stop-color="#707070" /><stop offset=".6" stop-color="#c8c8c8" /><stop offset=".8" stop-color="#707070" /></linearGradient>
              <linearGradient id="cyl" x1=".3" y1="0" x2="0" y2="1"><stop offset="0" stop-color="#f0f0f0" /><stop offset=".2" stop-color="#999" /><stop offset=".5" stop-color="#717171" /></linearGradient>
              <linearGradient id="dome" x1="0" x2="1"><stop offset="0" stop-color="#5c5c5c" /><stop offset=".6" stop-color="#858585" /><stop offset="1" stop-color="#6b6b6b" /></linearGradient>
            </defs>
            <path fill="#787878" stroke-width="1.200" d="M1137 617L1272 523 1282 517 1370 478 1447 445 1578 499 1584 505 1578 523 1563 534 1557 557 1567 560 1563 580 1543 598 1557 624 1562 624 1576 658 1599 647 1622 697 1553 746 1525 759 1470 797 1440 813 1423 820 1418 812 1402 810 1392 800 1340 837 1273 883 1253 893 1233 899 1195 815 1187 782 1170 785Q1150 783 1140 773L1139 763 1113 752 1106 761 1089 753 1091 747z" />
            <g transform="translate(1070 430) scale(.3333)" stroke-width="3">
              <path fill="#858585" d="M200 560L605 280 900 145 1130 47 1100 80 725 335 705 348z" />
              <path fill="#696969" d="M625 370L725 332 1130 50 900 180 725 285z" />
              <path d="M205 557L330 495 480 410 605 352 900 180 1080 95M370 485L720 345M370 485L470 410 700 240 1000 110M470 418L620 352 900 205M480 430L660 335 520 390 670 285 900 170M605 280L625 290 700 240 610 275M680 270L820 225 855 195 740 225zM560 405L640 365 900 190M330 495L455 428 660 290" />
              <path d="M720 240L880 180M690 255L860 195M400 480L600 395" stroke-width="4" />
              <path fill="#7b7b7b" d="M200 560L705 348 728 376 275 566 205 600 236 612 107 992 57 970 62 952z" stroke="none" />
              <path d="M200 560L705 348M205 600L728 376 720 404 697 396 690 418 375 642" />
              <path fill="#828282" d="M460 488L693 410 720 425 697 500 652 525 615 635 525 672 412 630 370 645 290 612z" />
              <path fill="#5f5f5f" d="M375 528L470 487 300 608 296 580z" />
              <path d="M385 642L710 425M412 630L395 648Q380 652 370 645M525 672L625 608M652 525Q690 530 697 495M720 425L695 500" />
              <path fill="#747474" d="M720 420L797 445 735 625 614 637 655 525Q695 530 700 495z" />
              <path fill="url(#dome)" d="M797 445L1015 530 950 720 900 700Q820 640 735 625z" />
              <path fill="#6a6a6a" d="M250 580L270 572 210 720 130 960 107 992 200 720z" />
              <path d="M205 600L240 580 236 612M200 560L62 952M270 575L300 580 290 612M205 600L270 572" />
              <path fill="url(#cyl)" d="M235 672L465 755Q420 800 385 880L345 960 155 885 210 720z" />
              <path d="M155 885L345 962M62 952L112 972 130 960M207 1000Q260 1060 320 1042" />
              <path fill="#fff" stroke="none" d="M215 598l25-13-7 18z" />
            </g>

            <g transform="translate(1340 430) scale(.3333)" stroke-width="3">
              <path fill="#6e6e6e" d="M205 538L275 560 668 312 650 380 608 505 658 585 450 725 270 870 205 780 140 720z" stroke="none" />
              <path fill="#808080" d="M320 45L715 208 733 225 320 515 275 512 0 392-105 348 0 272z" />
              <path fill="#777" d="M-105 348L0 392 275 512 265 555 0 448-110 402z" />
              <path fill="#909090" d="M275 512L320 515 308 562Q285 570 262 555z" />
              <path fill="#606060" d="M733 225L715 278 308 563 320 515z" />
              <path d="M205 538L140 720M283 568L205 820M320 45L185 145M180 120l8 22M220 95l8 22M668 312L640 390" />
              <g v-for="b in bores" :key="b[0]" :transform="`translate(${b[0]} ${b[1]}) rotate(20)`">
                <ellipse rx="164" ry="48" fill="#747474" /><ellipse rx="151" ry="41" fill="#858585" stroke-dasharray="16 3" /><ellipse rx="144" ry="37" />
                <ellipse cx="2" cy="3" rx="135" ry="34" fill="url(#bore)" />
              </g>
              <g v-for="b in bores" :key="'h' + b[0]" :transform="`translate(${b[0] - 466} ${b[1] - 180})`">
                <ellipse cx="647" cy="215" rx="19" ry="7" transform="rotate(15 647 215)" /><path d="M292 165l18-6 38 26-42-7zM485 243l57 17-12 10z" fill="#666" />
              </g>
              <ellipse cx="275" cy="474" rx="19" ry="7" transform="rotate(15 275 474)" />
              <path fill="#777" d="M340 720L520 600 608 505 655 582 450 720 270 850 210 815z" />
              <g v-for="p in ports" :key="'p' + p[0]" :transform="`translate(${p[0]} ${p[1]})`">
                <path fill="#666" d="M600 375L545 500 540 520 580 500 605 500 600 480z" />
                <path fill="#777" d="M603 375l5-20 22-8 8 28 42 13-5 45-50 55-25 12-20-28z" />
                <path d="M608 372q5-16 18-12M520 585l-18-28 30-35 25-8-22 85-15 10z" fill="#747474" />
                <path fill="url(#tube)" d="M603 375L638 378 645 395 615 425 605 495 582 470Q580 420 603 375z" />
                <path fill="#818181" d="M682 390L674 432 628 486 605 500 600 465 615 425 645 392z" />
                <path fill="url(#tube)" d="M670 403L662 440 630 474 620 462 628 430 648 408z" />
                <path d="M638 375L650 388" />
              </g>
              <path fill="#7b7b7b" d="M655 582L665 582 707 683 540 770 300 865 250 870 270 850z" />
              <path fill="#6e6e6e" d="M668 605L700 680 490 830 557 985 380 1080 285 870z" />
              <path d="M655 582L250 855M665 592L275 845M670 605l35 70M604 645l-2 80 35 60M612 655l35 80M540 690l-2 75 30 60M548 700l30 70M665 610l12 80M675 620l20 65" />
              <path d="M285 870L375 1075M345 830L365 1065 378 1080 355 830M408 788L430 1040 444 1035 418 785M475 740L498 990 512 985 483 738M350 830L440 1040M415 788L505 985M480 740L548 965M540 700L550 790M610 650L625 745" />
              <path fill="#757575" d="M707 683L778 650 847 802 640 948 555 988 490 832z" />
              <path d="M510 826L580 975M572 795L640 948M490 832L720 690" /><path fill="#6c6c6c" d="M612 795L705 735Q755 770 753 840L660 900Q610 870 612 795z" /><path d="M672 760Q720 800 708 868L655 895M650 890L750 835" /><path fill="#bbb" stroke="none" d="M682 762L720 742 735 765 695 785z" />
              <path fill="#707070" d="M380 1078L545 965 555 988 390 1104 300 1150 318 1120 385 1092z" /><path stroke="#ccc" stroke-width="6" d="M320 1124l62-24" />
            </g>

            <g transform="translate(1070 660) scale(.3333)" stroke-width="3">
              <path fill="#797979" d="M550 700Q460 590 425 530C380 470 347 385 348 300C350 100 490-60 690-62C880-62 975 55 1018 150C1075 250 1070 355 1110 460L1060 475 1025 420 950 440 810 170 560 435 605 675z" />
              <path d="M545 693C400 520 360 430 366 300C370 110 500-42 690-47C870-47 960 65 1000 150C1050 260 1055 360 1095 463M1080 180l30 100 40 165M1062 160l30-12M1065 180l30-10M1075 250l15-6" />
              <path fill="#6d6d6d" d="M540 388L640 350 790 280 893 240 965 385 960 425 610 660 632 600 610 545 590 542 555 445z" />
              <path fill="#777" stroke="none" d="M560 437L795 280 893 240 965 385 960 425 610 660 632 600 610 545 590 542z" />
              <path fill="#7e7e7e" d="M640 350L628 350Q620 250 690 230T790 280L560 437 540 390z" stroke-width="2.500" />
              <path d="M500 382L540 340 600 280Q620 215 690 195T780 212L845 208M465 50L578 305M478 45L592 290M618 122L660 205M632 118L668 200M690 0L785 210M702 0L795 208M930 70L840 208M945 75L850 205M365 305L545 332M365 320L535 342M388 425L500 380M395 435L500 390M500 390L520 435 508 625M528 455L517 625M528 455L595 600 577 640 595 680M540 388L530 395 555 445 550 455 590 542 615 550 634 598 610 615 602 665M505 605L375 470M548 700L375 470M380 470L490 718M790 280L810 285 960 225M605 672L970 412M605 662L960 405M795 208Q860 215 1010 150M910 215L930 260 1075 370M940 278L1010 425 1055 435 1075 470M870 255L890 290 930 295 965 380M910 205L1018 160" />
              <path d="M470 50L585 300M696 0L790 208M365 312L540 338M950 285l72 138 35 12" stroke-width="4" />
              <path d="M537 12Q510-5 465 40M537 12Q520 70 555 105T655 85T650 10T590-40T545 20M600-30Q650-60 700-50M605-35L655-5" />
              <ellipse cx="595" cy="60" rx="40" ry="42" fill="#6c6c6c" /><path d="M605 22Q635 40 632 60T603 95z" fill="#e0e0e0" stroke="none" /><path d="M600 20L578 95 602 97 605 30zM580 92L635 95" />
              <path fill="url(#dome)" d="M207 312L320 352Q300 375 290 375Q230 370 210 340z" stroke-width="2.500" /><path d="M130 275L350 362" /><path d="M490 710L540 690" stroke="#bbb" stroke-width="6" />
            </g>

            <g stroke="#94703f" stroke-width="1"><path d="M1325 600L1333 622M1290 680L1348 657M1290 680L1317 740M1330 670L1354 725M1330 670L1347 660M1298 756L1345 738 1377 718M1258 770L1285 757" /></g>
            <path d="M1337 632L1350 660" stroke="#5f5b9b" stroke-width="2" /><path d="M1350 660L1377 718" stroke="#725767" /><path d="M1333 621l10 15-6 3-3-2z" fill="#6965a5" stroke="none" />
            <path d="M1320 593l8 13-5 2z" fill="#99835c" stroke="none" /><path d="M1258 769l10-8 4 3-3 4z" fill="#80705c" stroke="none" />
            <path d="M1377 718L1300 749" stroke="#c65b24" stroke-width="2" /><path d="M1286 757l14-10 1 8z" fill="#f01510" stroke="#d00" /><path d="M1377 718l-25 18" stroke="#7f8a1a" /><circle cx="1352" cy="736" r="4.500" fill="#4e8048" stroke="none" /><circle cx="1342" cy="742" r="4" fill="#866246" stroke="none" />
          </svg>

          <svg class="triad" viewBox="0 0 90 130" fill="none">
            <path d="M74 88L48 32" stroke="#1414f0" stroke-width="2" /><path d="M47 30l9 11-4 3-2-1z" fill="#4a4ae8" stroke="#00c" />
            <path d="M74 88L27 108" stroke="#f01010" stroke-width="2" /><path d="M20 111l10-7 3 5z" fill="#f01010" stroke="#800" />
            <path d="M74 88L60 99" stroke="#30c020" stroke-width="2" /><circle cx="60" cy="99" r="4" fill="#107010" />
            <text x="38" y="28" fill="#1414f0">Z</text><text x="5" y="122" fill="#f01010">X</text><text x="48" y="108" fill="#30c020">Y</text>
          </svg>
          <div class="scale">1210.49mm</div>
        </div>
        <div class="sheets">
          <button class="nav" aria-label="First">
            <svg viewBox="0 0 70 12" fill="#707375"><path d="M3 2h2v8H3zM11 2v8L6 6zM30 2v8l-6-4zM38 2v8l6-4zM54 2v8l5-4zM60 2h2v8h-2z" /></svg>
          </button>
          <a href="#">Model</a>
          <a href="#" class="cur">Frequency and mode shapes1</a>
        </div>
      </main>
    </div>

    <footer class="status">
      <i class="vsep"></i>
      <button class="on" aria-label="Tool window"><Ico n="tool" /></button>
      <button aria-label="Display"><Ico n="monitor" /></button>
      <button aria-label="Output"><Ico n="listwin" /></button>
      <input aria-label="Message" readonly>
    </footer>
  </div>
</template>

<style>
html, body { background: #e8eaec; overflow: hidden; }
</style>

<style scoped>
.app { height: 100vh; display: flex; flex-direction: column; background: #e8eaec; color: #1f1f1f; font: 14px/20px "Open Sans", "Noto Sans", sans-serif; overflow: hidden; }
.app * { box-sizing: border-box; }
button { appearance: none; border: 0; padding: 0; margin: 0; background: none; font: inherit; color: inherit; }
a { color: inherit; text-decoration: none; }
input, select { font: inherit; color: inherit; margin: 0; border-radius: 0; outline: 0; }
i { font-style: normal; flex: none; }
.ico { width: 20px; height: 20px; flex: none; display: block; }
.ico.small { width: 16px; height: 16px; }
.caret { width: 0; height: 0; border: 5px solid transparent; border-top: 6px solid #1c1c1c; border-bottom: 0; }
.slotcaret { margin: 0 5px 0 3px; }
.slot { width: 28px; height: 26px; flex: none; display: flex; align-items: center; justify-content: center; }
.slot.wide { width: 34px; }
.on { background: #fde173; border: 1px solid #c79a35; }
.mark { position: absolute; border: 5px solid #ee1c24; pointer-events: none; z-index: 2; }
.num { position: absolute; color: #ee1c24; font: 500 20px/20px "Noto Sans", "Open Sans", sans-serif; z-index: 2; }

.titlebar { flex: none; display: flex; align-items: center; height: 35px; padding-right: 1px; }
.logo { width: 18px; }
.thin { width: 1px; height: 14px; background: #b5b8ba; margin: 0 8px 0 4px; }
.more { flex-direction: column; gap: 2px; width: 20px; }
.bar { width: 10px; height: 2px; background: #111; }
.left-arrow { border: 7px solid transparent; border-right: 8px solid #1d86c9; border-left: 0; margin: 0 16px 0 3px; }
.menu { display: flex; gap: 18px; flex: none; }
.wintitle { flex: 1; text-align: center; color: #a1a3a5; white-space: nowrap; }

.tabrow { flex: none; display: flex; align-items: center; height: 27px; border-bottom: 1px solid #b8bcc3; }
.filetab { width: 88px; height: 27px; flex: none; background: #4a87e8; border: 1px solid #2a5fb5; color: #fff; }
.tabs { display: flex; gap: 1px; margin-left: 3px; flex: 1; white-space: nowrap; align-self: stretch; }
.tabs a { padding: 5px 10px 0; height: 27px; position: relative; }
.tabs a.active { background: #fcfcfd; }
.tabs .mark { inset: -4px -1px 0; }
.one { right: -14px; top: -10px; }
.find { display: flex; align-items: center; width: 182px; height: 24px; border: 1px solid #b8bcc3; background: #fdfdfd; margin: 0 6px 0 8px; padding-right: 4px; flex: none; }
.find input { flex: 1; min-width: 0; border: 0; background: none; padding: 0 2px; }
.find .ico { width: 18px; height: 18px; }
::placeholder { color: #8b8d8f; opacity: 1; }
.docbtns { display: flex; gap: 4px; margin: 0 -2px 0 12px; flex: none; }

.ribbon { flex: none; display: grid; grid-template-columns: 155px 225px 345px 306px 156px 239px 158px 57px 103px 103px 56px 1fr; background: #fcfcfd; border-bottom: 1px solid #b8bcc3; height: 116px; }
.group { position: relative; display: flex; flex-direction: column; padding-top: 5px; min-width: 0; }
.group::after { content: ""; position: absolute; right: 0; top: 6px; bottom: 0; width: 1px; background: linear-gradient(#eceded, #c5c9ce 30%); }
.items { display: grid; grid-template-rows: repeat(3, 28px); grid-auto-flow: column; justify-content: start; }
.geometry { grid-template-columns: 194px; }
.analysis { grid-template-columns: 114px; }
.icons { grid-template-columns: 47px 47px; }
.item { display: flex; align-items: center; gap: 4px; padding-left: 9px; white-space: nowrap; }
.item .caret { margin-left: 4px; }
.icons .caret { margin-left: 2px; }
.glabel { text-align: center; color: #7b7d80; line-height: 26px; }
.group .mark { inset: -6px -1px 84px 0; }
.two { left: 0; top: 35px; }

.toolbar { flex: none; display: flex; align-items: center; height: 36px; padding-top: 2px; overflow: hidden; }
.dots { width: 2px; height: 20px; background: repeating-linear-gradient(#8a8d90 0 2px, transparent 2px 4px); margin: 0 3px 0 2px; }
.dots.spaced { margin: 0 4px 0 5px; }
.vsep { width: 1px; height: 26px; background: #b8bcc3; margin: 0 1px; }
.combo { position: relative; height: 26px; border: 1px solid #b8bcc3; background: #fdfdfd; flex: none; margin-right: 1px; }
.slot + .combo, .slotcaret + .combo { margin-left: 2px; }
.on + .combo { margin-left: 0; }
.combo.long { width: 168px; }
.combo.mid { width: 123px; }
.combo select { appearance: none; border: 0; background: none; width: 100%; height: 100%; padding: 0 4px; display: block; }
.combo i { position: absolute; right: 7px; top: 10px; border: 4px solid transparent; border-top: 5px solid #333; border-bottom: 0; }
.combo.off { background: #eaeced; }
.combo.off i { border-top-color: #a5a8aa; }
.play .ico { background: linear-gradient(#f4f5f6, #cdd4d4); }
.over { margin-left: auto; font-size: 18px; }

.main { flex: 1; min-height: 0; display: flex; }
.left { width: 444px; flex: none; display: flex; flex-direction: column; min-height: 0; }
.ptitle { display: flex; align-items: center; height: 26px; padding: 0 7px 0 2px; gap: 9px; flex: none; color: #4a4c50; }
.ptitle span { flex: 1; }
.ptitle .ico:last-child { width: 17px; height: 17px; }
.ptitle + .panel { border-top: 1px solid #b8bcc3; }
.psearch { height: 26px; flex: none; border: 1px solid #b8bcc3; border-left: 0; background: #fdfdfd; padding: 0 1px; }
.treebox { display: flex; height: 162px; flex: none; border: 1px solid #b8bcc3; border-left: 0; overflow: hidden; margin-bottom: 3px; }
.tree { flex: 1; background: #fff; }
.row { display: flex; align-items: center; height: 23px; border-bottom: 1px solid #ececec; }
.row:nth-child(even) { background: #f5f5f5; }
.row label { display: flex; align-items: center; gap: 5px; }
.chev { width: 14px; height: 14px; flex: none; margin-right: 7px; }
.l1 { padding-left: 18px; }
.l2 { padding-left: 36px; }
.l3 { padding-left: 54px; }
.row input { appearance: none; width: 16px; height: 16px; border: 1px solid #000; background: #fff; margin-right: 3px; }
.row input:checked { background: #fff url("data:image/svg+xml,%3Csvg xmlns='http://www.w3.org/2000/svg' viewBox='0 0 14 14'%3E%3Cpath d='M2 7l3 5 7-10' fill='none' stroke='red' stroke-width='2'/%3E%3C/svg%3E"); }
.scroll { width: 21px; flex: none; background: #d8dce6; display: flex; flex-direction: column; align-items: center; padding: 7px 0; }
.scroll i { border: 5px solid transparent; }
.scroll .up { border-bottom: 6px solid #444; border-top: 0; }
.scroll .down { border-top: 6px solid #444; border-bottom: 0; margin-top: auto; }
.thumb { align-self: stretch; margin: 7px 1px 0; border: 1px solid #80868f; background: #e8ebf0 repeating-linear-gradient(#8a8d90 0 1px, transparent 1px 3px) center / 8px 8px no-repeat; }
.short { height: 54px; }
.tall { flex: 0 0 63%; }

.panel { flex: 1; min-height: 0; display: flex; border-right: 1px solid #b8bcc3; }
.side { width: 37px; border-right: 1px solid #b8bcc3; display: flex; flex-direction: column; flex: none; }
.side button { height: 60px; display: flex; align-items: center; justify-content: center; position: relative; flex: none; padding-right: 3px; }
.side .ico { width: 30px; height: 30px; }
.side .sel { height: 58px; background: #fcfcfd; border-bottom: 1px solid #b8bcc3; margin-right: -1px; }
.four { left: 20px; top: -1px; }
.pbody { flex: 1; min-width: 0; display: flex; flex-direction: column; background: #e1e5ea; border-bottom: 1px solid #b8bcc3; padding: 0 3px 4px 5px; }
.pbtns { display: flex; gap: 2px; height: 33px; align-items: center; flex: none; margin-left: -3px; padding-right: 3px; }
.pbtns button { width: 33px; height: 29px; border: 1px solid #b8bcc3; background: #fcfcfd; display: flex; align-items: center; justify-content: center; position: relative; }
.pbtns button:first-child { width: 36px; }
.pbtns .mark { inset: -1px -2px; border-width: 5px; }
.pbtns .push { margin-left: auto; }
.pbtns .narrow { width: 17px; }
.pbtns .push .ico { width: 16px; }
.plist { flex: 1; min-height: 0; display: flex; gap: 3px; }
.plist .scroll { width: 18px; }
.plist .thumb { margin: 7px 0 0; }
.secs { flex: 1; overflow: hidden; margin-left: -5px; padding: 2px 0 0 5px; }
.sec { margin-bottom: 2px; border: 1px solid #b8bcc3; }
.sec h3 { margin: 0; height: 29px; line-height: 29px; font-size: 14px; font-weight: 600; background: #fcfcfd; border-bottom: 1px solid #b8bcc3; display: flex; align-items: center; }
.sec h3 i { border: 6px solid transparent; border-top: 10px solid #54575b; border-bottom: 0; margin: 0 5px 0 4px; }
.opts { padding: 1px 0; background: #dce0e8; }
.opts label { display: flex; align-items: center; gap: 7px; height: 27px; position: relative; padding-left: 2px; color: #333; }
.opts input { appearance: none; width: 15px; height: 15px; border-radius: 50%; border: 2px solid #a6a9ac; background: radial-gradient(#fff 20%, #cfd1d3); }
.opts input:checked { background: radial-gradient(#ffd38a, #d0701a 50%, #f6f6f6 56%); }
.opts .mark { left: -5px; top: -2px; width: 107px; height: 32px; }
.three { left: 107px; top: 4px; }

.work { flex: 1; min-width: 0; display: flex; flex-direction: column; border-bottom: 1px solid #b8bcc3; margin-left: 3px; background: #e1e5e8; }
.doctabs { display: flex; align-items: stretch; height: 26px; flex: none; background: #e8eaec; border-bottom: 1px solid #b8bcc3; }
.doctab { width: 387px; border: 1px solid #b8bcc3; border-bottom: 0; background: #fcfcfd; margin-bottom: -1px; display: flex; align-items: center; justify-content: center; gap: 8px; padding: 0 0 2px 14px; }
.doctab button { font-size: 16px; font-weight: 600; color: #6d6037; }
.newtab { font-size: 22px; color: #9a9694; margin-left: 8px; font-weight: 600; }
.listcaret { margin: 12px 2px 0 auto; border: 5px solid transparent; border-top-color: #777; border-bottom: 0; height: 5px; }
.canvas { flex: 1; min-height: 0; position: relative; background: linear-gradient(#fefefe, #9e9e9e); overflow: hidden; border-left: 1px solid #b8bcc3; }
.viewtools { display: flex; align-items: center; height: 30px; padding-left: 364px; }
.viewtools .slotcaret { margin: 0 5px 0 4px; }
.layer { display: flex; align-items: center; width: 144px; height: 26px; margin-left: 5px; border: 1px solid #b8bcc3; background: #f0f0f1; color: #8b8d8f; padding: 0 8px; gap: 1px; }
.layer span { flex: 1; text-align: left; padding-left: 6px; }
.layer i { border: 4px solid transparent; border-top: 5px solid #aaa; border-bottom: 0; }
.hint { margin: -2px 0 0; padding-left: 20px; color: #111; font-family: "Noto Sans", sans-serif; }
.engine { position: absolute; left: 622px; top: 190px; width: 570px; height: 480px; }
.triad { position: absolute; left: 9px; bottom: 57px; width: 90px; height: 130px; font: 20px "Open Sans", sans-serif; }
.scale { position: absolute; left: 4px; bottom: -1px; font-size: 19px; line-height: 24px; color: #000; }
.sheets { height: 28px; flex: none; display: flex; align-items: stretch; padding-bottom: 2px; }
.nav { width: 70px; display: flex; align-items: center; }
.sheets a { padding: 4px 14px 0; }
.sheets .cur { background: #fcfcfd; border: 1px solid #b8bcc3; border-top: 0; margin-left: 2px; }

.status { height: 30px; flex: none; display: flex; align-items: center; padding-left: 71%; gap: 10px; }
.status > * { flex: none; }
.status .vsep { margin: 0; background: #7a7f88; height: 28px; }
.status button { width: 27px; height: 26px; display: flex; align-items: center; justify-content: center; }
.status .ico { width: 19px; height: 19px; }
.status input { flex: 1; min-width: 0; height: 27px; border: 1px solid #b8bcc3; border-right: 0; background: #fff; }
</style>
